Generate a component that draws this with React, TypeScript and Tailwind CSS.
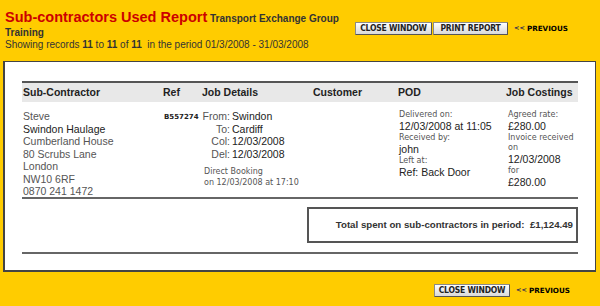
const small = "font-['DejaVu_Sans',Verdana,sans-serif] text-[8px] leading-[10px] text-[#555]";
const big = "text-[10.5px] leading-[13px] text-[#222]";

const Button = ({ label, width }: { label: string; width: string }) => (
  <button
    className={`${width} h-[13px] flex items-center justify-center whitespace-nowrap rounded-[1px] border border-[#8a8a8a] border-r-[#555] border-b-[#555] bg-gradient-to-b from-white to-[#d9d9d9] font-['Liberation_Sans_Narrow','DejaVu_Sans_Condensed','Liberation_Sans',sans-serif] text-[8.5px] font-bold leading-none tracking-[-0.2px] text-[#222] uppercase`}
  >
    {label}
  </button>
);

const Previous = () => (
  <a className="ml-[6px] flex items-center font-['DejaVu_Sans',Verdana,sans-serif] text-[7.2px] font-bold leading-none text-black">
    <span className="mr-[2px] text-[6.5px] text-[#1a1a5a]">&lt;&lt;</span>PREVIOUS
  </a>
);

const JOB = [
  { label: "From:", value: "Swindon" },
  { label: "To:", value: "Cardiff" },
  { label: "Col:", value: "12/03/2008" },
  { label: "Del:", value: "12/03/2008" },
];

export default function App() {
  return (
    <div className="w-[600px] h-[306px] bg-[#ffcc00] font-['Liberation_Sans',Arial,sans-serif] overflow-hidden">
      <div className="flex h-[61px]">
        <div className="w-[355px] pl-[5px] pt-[8.5px] text-[#333]">
          <div className="text-[10px] leading-[16px] font-bold">
            <span className="text-[14.5px] text-[#cc0000]">Sub-contractors Used Report</span>{" "}
            Transport Exchange Group
          </div>
          <div className="text-[10px] leading-[12px] font-bold">Training</div>
          <div className="text-[10px] leading-[11px]">
            Showing records <b>11</b> to <b>11</b> of <b>11</b>&nbsp; in the period 01/3/2008 - 31/03/2008
          </div>
        </div>
        <div className="flex items-start pt-[22px]">
          <Button label="Close Window" width="w-[77px]" />
          <Button label="Print Report" width="w-[75px] ml-[1px]" />
          <div className="h-[13px] flex items-center">
            <Previous />
          </div>
        </div>
      </div>

      <div className="ml-[3px] w-[593px] h-[211px] border border-l-2 border-b-2 border-[#444] bg-white pl-[17px] pt-[19px]">
        <div className="w-[556px]">
          <div className="grid grid-cols-[140px_39px_111px_85px_108px_73px] h-[21px] items-center border-t-2 border-[#555] bg-[#e8e8e8] text-[10.5px] font-bold text-[#222]">
            <div className="pl-[1px]">Sub-Contractor</div>
            <div className="pl-[1px]">Ref</div>
            <div className="pl-[1px]">Job Details</div>
            <div className="pl-[1px]">Customer</div>
            <div className="pl-[1px]">POD</div>
            <div className="pl-[1px]">Job Costings</div>
          </div>

          <div className="grid grid-cols-[140px_39px_111px_85px_108px_73px] pt-[8px] border-b-2 border-[#666] h-[97px]">
            <div className="pl-[1px] text-[10.5px] leading-[12.5px] text-[#555]">
              <div>Steve</div>
              <div className="text-[#222]">Swindon Haulage</div>
              <div>Cumberland House</div>
              <div>80 Scrubs Lane</div>
              <div>London</div>
              <div>NW10 6RF</div>
              <div>0870 241 1472</div>
            </div>
            <div className="pl-[2px] pt-[2px] font-['DejaVu_Sans',Verdana,sans-serif] text-[7px] font-bold leading-[10px] text-[#222]">
              B557274
            </div>
            <div className="pl-[1px]">
              {JOB.map((row) => (
                <div key={row.label} className="flex text-[10.5px] leading-[12.5px]">
                  <span className="w-[28px] text-right text-[#555]">{row.label}</span>
                  <span className="ml-[2px] text-[#222]">{row.value}</span>
                </div>
              ))}
              <div className={`${small} mt-[6px] pl-[2px] leading-[11px] text-[#333]`}>
                <div>Direct Booking</div>
                <div>on 12/03/2008 at 17:10</div>
              </div>
            </div>
            <div />
            <div className="pl-[2px]">
              <div className={small}>Delivered on:</div>
              <div className={big}>12/03/2008 at 11:05</div>
              <div className={small}>Received by:</div>
              <div className={big}>john</div>
              <div className={small}>Left at:</div>
              <div className={big}>Ref: Back Door</div>
            </div>
            <div className="pl-[3px]">
              <div className={small}>Agreed rate:</div>
              <div className={big}>£280.00</div>
              <div className={small}>Invoice received</div>
              <div className={small}>on</div>
              <div className={big}>12/03/2008</div>
              <div className={small}>for</div>
              <div className={big}>£280.00</div>
            </div>
          </div>

          <div className="mt-[8px] ml-auto w-[271px] h-[36px] flex items-center justify-end border-2 border-[#555] pr-[3px] text-[9.7px] font-bold text-[#333]">
            Total spent on sub-contractors in period:&nbsp; £1,124.49
          </div>

          <div className="mt-[9px] border-t-2 border-[#666]" />
        </div>
      </div>

      <div className="flex justify-end pr-[30px] pt-[12px]">
        <Button label="Close Window" width="w-[76px]" />
        <div className="h-[13px] flex items-center">
          <Previous />
        </div>
      </div>
    </div>
  );
}
